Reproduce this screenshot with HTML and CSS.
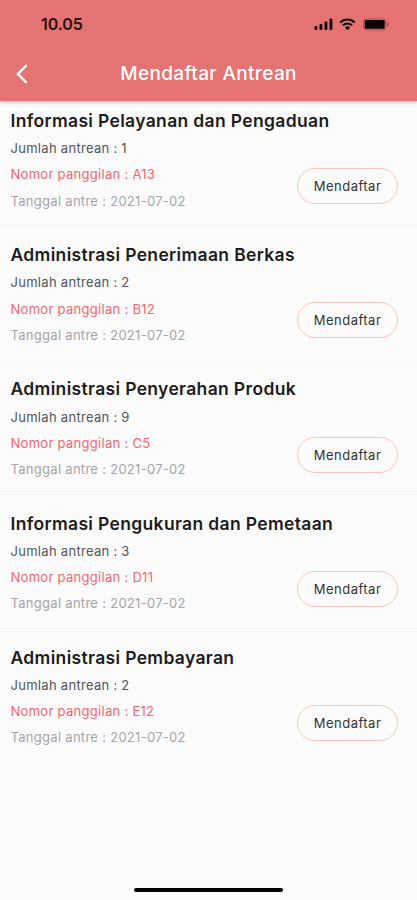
FILE: index.html
```
<!DOCTYPE html>
<html lang="id">
<head>
    <meta charset="UTF-8">
    <meta name="viewport" content="width=device-width, initial-scale=1.0">
    <title>Mendaftar Antrean</title>
    <link rel="stylesheet" href="styles.css">
</head>
<body>
    <header class="header">
        <div class="status-bar">
            <span class="time">10.05</span>
            <div class="status-icons">
                <svg width="20" height="13" viewBox="0 0 20 13">
                    <rect x="1.5" y="8" width="2.8" height="4" rx="1"/>
                    <rect x="6.5" y="6" width="2.8" height="6" rx="1"/>
                    <rect x="11.5" y="3.5" width="2.8" height="8.5" rx="1"/>
                    <rect x="16.5" y="0.5" width="2.8" height="11.5" rx="1"/>
                </svg>
                <svg class="wifi" width="17" height="13" viewBox="0 0 17 13">
                    <path d="M1.2 4.6a10.4 10.4 0 0 1 14.6 0M3.9 7.4a6.6 6.6 0 0 1 9.2 0" fill="none" stroke="#150808" stroke-width="2"/>
                    <path d="M8.5 12.2 5.9 9.5a3.8 3.8 0 0 1 5.2 0z"/>
                </svg>
                <svg class="battery" width="27" height="13" viewBox="0 0 27 13">
                    <rect x="0.5" y="0.9" width="22.4" height="11" rx="2.5" fill="none" stroke="#a95357"/>
                    <rect x="1.7" y="2" width="20" height="8.8" rx="1"/>
                    <path d="M24 4.2c2.6.8 2.6 3.6 0 4.4z" fill="#a04c50"/>
                </svg>
            </div>
        </div>
        <div class="nav-bar">
            <a href="#" class="back-link" aria-label="Kembali">
                <svg width="12" height="20" viewBox="0 0 12 20">
                    <path d="M10.6 1.2 2 10l8.6 8.8" fill="none" stroke="#fff" stroke-width="2.4"/>
                </svg>
            </a>
            <h1>Mendaftar Antrean</h1>
        </div>
    </header>

    <main class="queue-list">
        <div class="queue-item">
            <h2>Informasi Pelayanan dan Pengaduan</h2>
            <div class="queue-body">
                <div class="queue-info">
                    <p>Jumlah antrean : 1</p>
                    <p class="number">Nomor panggilan : A13</p>
                    <p class="date">Tanggal antre : 2021-07-02</p>
                </div>
                <button type="button">Mendaftar</button>
            </div>
        </div>
        <div class="queue-item">
            <h2>Administrasi Penerimaan Berkas</h2>
            <div class="queue-body">
                <div class="queue-info">
                    <p>Jumlah antrean : 2</p>
                    <p class="number">Nomor panggilan : B12</p>
                    <p class="date">Tanggal antre : 2021-07-02</p>
                </div>
                <button type="button">Mendaftar</button>
            </div>
        </div>
        <div class="queue-item">
            <h2>Administrasi Penyerahan Produk</h2>
            <div class="queue-body">
                <div class="queue-info">
                    <p>Jumlah antrean : 9</p>
                    <p class="number">Nomor panggilan : C5</p>
                    <p class="date">Tanggal antre : 2021-07-02</p>
                </div>
                <button type="button">Mendaftar</button>
            </div>
        </div>
        <div class="queue-item">
            <h2>Informasi Pengukuran dan Pemetaan</h2>
            <div class="queue-body">
                <div class="queue-info">
                    <p>Jumlah antrean : 3</p>
                    <p class="number">Nomor panggilan : D11</p>
                    <p class="date">Tanggal antre : 2021-07-02</p>
                </div>
                <button type="button">Mendaftar</button>
            </div>
        </div>
        <div class="queue-item">
            <h2>Administrasi Pembayaran</h2>
            <div class="queue-body">
                <div class="queue-info">
                    <p>Jumlah antrean : 2</p>
                    <p class="number">Nomor panggilan : E12</p>
                    <p class="date">Tanggal antre : 2021-07-02</p>
                </div>
                <button type="button">Mendaftar</button>
            </div>
        </div>
    </main>

    <div class="home-indicator"></div>
</body>
</html>
```
FILE: styles.css
```
* {
    margin: 0;
    padding: 0;
    box-sizing: border-box;
    font-family: Inter, sans-serif;
}

body {
    height: 900px;
    display: flex;
    flex-direction: column;
    background: #fbfbfb;
    overflow: hidden;
}

.header {
    height: 100.5px;
    background: #e57373;
    box-shadow: 0 1px 4px rgba(0, 0, 0, 0.3);
}

.status-bar {
    height: 48px;
    padding: 0 27px 0 41px;
    display: flex;
    align-items: center;
    justify-content: space-between;
}

.time {
    font-size: 16px;
    font-weight: 600;
    letter-spacing: -0.1px;
    color: #2a0f0f;
}

.status-icons {
    display: flex;
    align-items: center;
    fill: #0c0303;
}

.wifi {
    margin-left: 6px;
}

.battery {
    margin-left: 7px;
}

.nav-bar {
    height: 51px;
    padding: 0 16px;
    display: grid;
    grid-template-columns: 12px 1fr 12px;
    align-items: center;
}

.back-link {
    display: flex;
}

h1 {
    font-size: 19px;
    font-weight: 500;
    letter-spacing: 0.35px;
    text-align: center;
    color: #fff;
}

.queue-list {
    flex: 1;
}

.queue-item {
    height: 134.2px;
    padding: 15.8px 19px 0 10.5px;
    border-bottom: 1px solid #f5f5f5;
}

.queue-item:first-child {
    height: 126px;
    padding-top: 7.6px;
}

.queue-item:last-child {
    border-bottom: none;
}

h2 {
    font-size: 17.5px;
    font-weight: 600;
    line-height: 26px;
    letter-spacing: 0.34px;
    color: #1c1c1c;
    white-space: nowrap;
}

.queue-body {
    padding-top: 1.2px;
    display: flex;
    justify-content: space-between;
    align-items: flex-end;
}

.queue-info p {
    font-size: 13px;
    line-height: 26.2px;
    letter-spacing: 0.29px;
    color: #555;
}

.queue-info .number {
    color: #f8656a;
}

.queue-info .date {
    color: #a5a5a5;
}

button {
    width: 101px;
    height: 36px;
    margin-bottom: 9.7px;
    border: 1px solid #fbc4b8;
    border-radius: 18px;
    background: transparent;
    font-size: 13px;
    letter-spacing: 0.5px;
    color: #333;
}

.home-indicator {
    width: 149px;
    height: 4px;
    margin: 0 auto 8px;
    border-radius: 2px;
    background: #000;
}
```
